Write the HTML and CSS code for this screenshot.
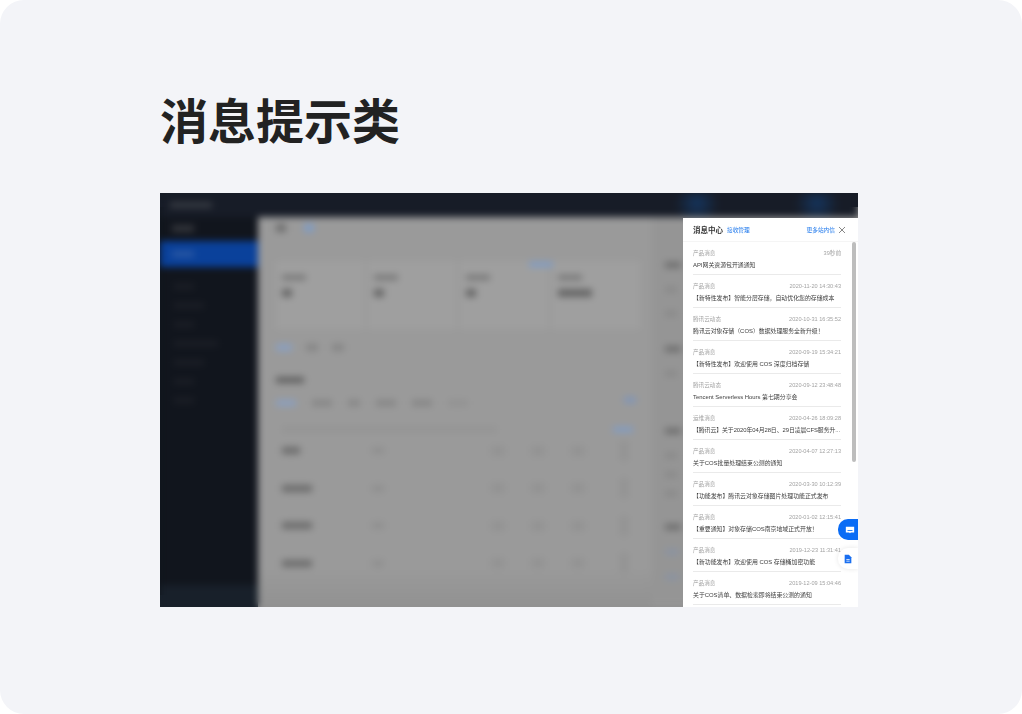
FILE: index.html
```html
<!DOCTYPE html>
<html lang="zh">
<head>
<meta charset="utf-8">
<title>消息提示类</title>
<link rel="stylesheet" href="styles.css">
</head>
<body>
<main class="card">
  <h1 class="title">消息提示类</h1>
  <section class="shot">
    <div class="backdrop">
      <header class="topbar"><span class="logo"></span></header>
      <div class="body">
        <nav class="sidebar">
          <span class="nav-head"></span>
          <span class="nav-active"><span class="nav-active-label"></span></span>
          <span class="nav-line w1"></span>
          <span class="nav-line w2"></span>
          <span class="nav-line w1"></span>
          <span class="nav-line w3"></span>
          <span class="nav-line w2"></span>
          <span class="nav-line w1"></span>
          <span class="nav-line w1"></span>
          <span class="nav-foot"></span>
        </nav>
        <div class="content">
          <div class="main">
            <div class="crumbs"><span class="blob"></span><span class="blob blue"></span></div>
            <span class="stat-link"></span>
            <div class="stats">
              <div class="stat"><span class="s1"></span><span class="s2"></span></div>
              <div class="stat"><span class="s1"></span><span class="s2"></span></div>
              <div class="stat"><span class="s1"></span><span class="s2"></span></div>
              <div class="stat"><span class="s1"></span><span class="s2 wider"></span></div>
            </div>
            <div class="tabs"><span class="tab blue"></span><span class="tab"></span><span class="tab"></span></div>
            <span class="section-title"></span>
            <div class="filters"><span class="filter blue"></span><span class="filter"></span><span class="filter short"></span><span class="filter"></span><span class="filter"></span><span class="filter faint"></span><span class="filter-link"></span></div>
            <div class="thead"><span class="thead-text"></span><span class="thead-link"></span></div>
            <div class="row"><span class="r1 short"></span><span class="r2"></span><span class="dot"></span><span class="dot"></span><span class="dot"></span><span class="tall"></span></div>
            <div class="row"><span class="r1"></span><span class="r2"></span><span class="dot"></span><span class="dot"></span><span class="dot"></span><span class="tall"></span></div>
            <div class="row"><span class="r1"></span><span class="r2"></span><span class="dot"></span><span class="dot"></span><span class="dot"></span><span class="tall"></span></div>
            <div class="row"><span class="r1"></span><span class="r2"></span><span class="dot"></span><span class="dot"></span><span class="dot"></span><span class="tall"></span></div>
          </div>
          <div class="rail">
            <span class="rail-item dark"></span><span class="rail-item soft"></span><span class="rail-item soft"></span>
            <span class="rail-item dark m30"></span><span class="rail-item soft"></span>
            <span class="rail-item dark m52"></span><span class="rail-item soft"></span><span class="rail-item soft m14"></span><span class="rail-item soft m14"></span>
            <span class="rail-item dark m28"></span><span class="rail-item blue"></span><span class="rail-item blue"></span>
          </div>
        </div>
      </div>
    </div>
    <aside class="panel">
      <div class="panel-head">
        <strong class="panel-title">消息中心</strong>
        <span class="link">接收管理</span>
        <span class="link more">更多站内信</span>
        <svg class="close" viewBox="0 0 8 8" aria-hidden="true"><path d="M1 1l6 6M7 1L1 7"/></svg>
      </div>
      <div class="list">
        <article class="item"><div class="meta"><span>产品消息</span><span>39秒前</span></div><p>API网关资源包开通通知</p></article>
        <article class="item"><div class="meta"><span>产品消息</span><span>2020-11-20 14:30:43</span></div><p>【新特性发布】智能分层存储&#xFF0C;自动优化您的存储成本</p></article>
        <article class="item"><div class="meta"><span>腾讯云动态</span><span>2020-10-31 16:35:52</span></div><p>腾讯云对象存储&#xFF08;COS&#xFF09;数据处理服务全新升级&#xFF01;</p></article>
        <article class="item"><div class="meta"><span>产品消息</span><span>2020-09-19 15:34:21</span></div><p>【新特性发布】欢迎使用 COS 深度归档存储</p></article>
        <article class="item"><div class="meta"><span>腾讯云动态</span><span>2020-09-12 23:48:48</span></div><p>Tencent Serverless Hours 第七期分享会</p></article>
        <article class="item"><div class="meta"><span>运维消息</span><span>2020-04-26 18:09:28</span></div><p class="tight">【腾讯云】关于2020年04月28日、29日凌晨CFS服务升...</p></article>
        <article class="item"><div class="meta"><span>产品消息</span><span>2020-04-07 12:27:13</span></div><p>关于COS批量处理结束公测的通知</p></article>
        <article class="item"><div class="meta"><span>产品消息</span><span>2020-03-30 10:12:39</span></div><p>【功能发布】腾讯云对象存储图片处理功能正式发布</p></article>
        <article class="item"><div class="meta"><span>产品消息</span><span>2020-01-02 12:15:41</span></div><p>【重要通知】对象存储COS南京地域正式开放&#xFF01;</p></article>
        <article class="item"><div class="meta"><span>产品消息</span><span>2019-12-23 11:31:41</span></div><p>【新功能发布】欢迎使用 COS 存储桶加密功能</p></article>
        <article class="item"><div class="meta"><span>产品消息</span><span>2019-12-09 15:04:46</span></div><p>关于COS清单、数据检索即将结束公测的通知</p></article>
      </div>
      <span class="scrollbar"></span>
    </aside>
    <button class="fab chat" aria-label="消息"><svg viewBox="0 0 12 12" aria-hidden="true"><path fill="#fff" d="M1 2h10v7H7L6 10 5 9H1z"/><path fill="#0a6cf5" d="M3 6h6v1H3z"/></svg></button>
    <button class="fab doc" aria-label="文档"><svg viewBox="0 0 12 12" aria-hidden="true"><path fill="#1a6ff0" d="M2 1h5l3 3v7H2z"/><path fill="#fff" d="M4 6h4v1H4zM4 8h4v1H4z"/></svg></button>
  </section>
</main>
</body>
</html>
```
FILE: styles.css
```css
* { box-sizing: border-box; margin: 0; padding: 0; }
html, body { height: 100%; background: #fff; }
body { font-family: "Liberation Sans", "Noto Sans CJK SC", sans-serif; overflow: hidden; }
.card { height: 714px; width: 1022px; background: #f3f4f8; border-radius: 24px; padding: 83px 164px 0 160px; overflow: hidden; }
.title { font-family: "Noto Sans CJK SC", sans-serif; font-size: 48px; font-weight: 700; line-height: 70px; color: #222; margin: 0 0 40px 0; }
.shot { position: relative; width: 698px; height: 414px; overflow: hidden; background: linear-gradient(#171c27, #171c27) top / 100% 14px no-repeat, linear-gradient(#18202a, #18202a) left bottom / 98px 12px no-repeat, linear-gradient(#11151d, #11151d) left / 14px 100% no-repeat, #8f8f8f; }
.backdrop { width: 100%; height: 100%; display: flex; flex-direction: column; filter: blur(3.6px); }
.topbar { height: 24px; flex: none; display: flex; align-items: center; padding-left: 10px; background: radial-gradient(circle at 537px 10px, #15345c 0, transparent 22px), radial-gradient(circle at 657px 10px, #15345c 0, transparent 22px), #171c27; }
.logo { width: 42px; height: 6px; background: #363a42; }
.body { flex: 1; display: flex; min-height: 0; }
.sidebar { width: 98px; flex: none; background: #11151d; display: flex; flex-direction: column; }
.nav-head { width: 22px; height: 7px; background: #33353b; margin: 8px 0 9px 12px; flex: none; }
.nav-active { height: 26px; flex: none; background: #0a419b; margin-bottom: 17px; padding: 10px 0 0 12px; }
.nav-active-label { display: block; width: 22px; height: 6px; background: #2a58a4; }
.nav-line { height: 5px; flex: none; background: #1d2027; margin: 0 0 14px 14px; }
.w1 { width: 20px; } .w2 { width: 30px; } .w3 { width: 44px; }
.nav-foot { margin-top: auto; height: 22px; flex: none; background: #18202a; }
.content { flex: 1; display: flex; background: linear-gradient(180deg, #9a9a9a 0, #9a9a9a 90%, #919191 100%); min-width: 0; }
.main { width: 394px; flex: none; padding: 7px 0 0 18px; display: flex; flex-direction: column; position: relative; }
.rail { flex: 1; padding: 45px 0 0 13px; display: flex; flex-direction: column; background: #959595; }
.rail-item { height: 6px; flex: none; margin-top: 19px; }
.rail-item:first-child { margin-top: 0; }
.rail-item.dark { width: 16px; background: #6d6d6d; }
.rail-item.soft { width: 12px; height: 5px; background: #878787; }
.rail-item.blue { width: 14px; background: #8a93a2; }
.rail-item.m14 { margin-top: 14px; }
.rail-item.m28 { margin-top: 28px; }
.rail-item.m30 { margin-top: 30px; }
.rail-item.m52 { margin-top: 52px; }
.crumbs { display: flex; gap: 18px; height: 14px; flex: none; }
.blob { width: 10px; height: 8px; background: #6e6e6e; }
.blob.blue { background: #7f9bc4; }
.stat-link { position: absolute; left: 271px; top: 45px; width: 24px; height: 5px; background: #7f9cc6; }
.stats { display: flex; gap: 4px; height: 68px; margin: 23px 0 0 0; flex: none; }
.stat { width: 88px; padding: 14px 0 0 6px; background: #9f9f9f; display: flex; flex-direction: column; gap: 9px; }
.s1 { width: 24px; height: 5px; background: #757575; }
.s2 { width: 10px; height: 8px; background: #666; }
.s2.wider { width: 34px; }
.tabs { display: flex; gap: 14px; margin-top: 15px; height: 8px; flex: none; }
.tab { width: 12px; height: 7px; background: #858585; }
.tab.blue { width: 16px; background: #8a9fc0; }
.section-title { width: 28px; height: 6px; flex: none; background: #5f5f5f; margin-top: 25px; }
.filters { display: flex; gap: 16px; margin-top: 17px; height: 8px; flex: none; position: relative; }
.filter { width: 20px; height: 6px; background: #858585; }
.filter.blue { background: #8a9fc0; }
.filter.short { width: 12px; }
.filter.faint { background: #919191; }
.filter-link { position: absolute; left: 348px; top: -3px; width: 12px; height: 6px; background: #8095b8; }
.thead { display: flex; justify-content: space-between; align-items: center; height: 6px; flex: none; margin-top: 18px; padding: 0 19px 0 6px; }
.thead-text { width: 215px; height: 5px; background: #939393; }
.thead-link { width: 20px; height: 5px; background: #7f9cc6; }
.row { display: flex; align-items: center; height: 37.5px; flex: none; padding-left: 6px; }
.r1 { width: 30px; height: 7px; background: #6c6c6c; flex: none; }
.r1.short { width: 18px; }
.r2 { width: 12px; height: 7px; background: #8f8f8f; margin: 0 107px 0 60px; flex: none; }
.r1.short + .r2 { margin-left: 72px; }
.dot { width: 14px; height: 10px; background: #939393; margin-right: 26px; flex: none; }
.tall { width: 8px; height: 20px; margin-left: 9px; background: #939393; flex: none; }
.panel { position: absolute; right: 0; top: 25px; bottom: 0; width: 175px; background: #fff; filter: blur(.6px); }
.panel-head { height: 24px; padding: 0 12px 0 10px; display: flex; align-items: center; gap: 4px; border-bottom: 1px solid #f5f5f5; }
.panel-title { font-size: 7.5px; color: #333; font-weight: 700; }
.link { font-size: 5.7px; color: #1d77ec; }
.more { margin-left: auto; }
.close { width: 8px; height: 8px; fill: none; stroke: #888; stroke-width: 1; margin-left: -1px; }
.list { padding: 0 17px 0 10px; }
.item { height: 33px; padding-top: 7px; border-bottom: 1px solid #eaeaea; }
.meta { display: flex; justify-content: space-between; font-size: 5.6px; line-height: 8px; color: #a3a3a3; }
.item p { font-size: 5.9px; line-height: 8px; margin-top: 4px; color: #3d3d3d; white-space: nowrap; }
.item p.tight { letter-spacing: -.08px; }
.scrollbar { position: absolute; right: 2px; top: 24px; width: 4px; height: 220px; border-radius: 2px; background: #bdbdbd; }
.fab { position: absolute; right: 0; width: 20px; height: 21px; border: 0; border-radius: 10px 0 0 10px; display: flex; align-items: center; justify-content: center; filter: blur(.35px); }
.fab svg { width: 10px; height: 10px; }
.chat { top: 326px; background: #0a6cf5; padding-left: 3px; }
.doc { top: 355px; background: #fff; box-shadow: 0 0 5px rgba(0,0,0,.1); }
```
